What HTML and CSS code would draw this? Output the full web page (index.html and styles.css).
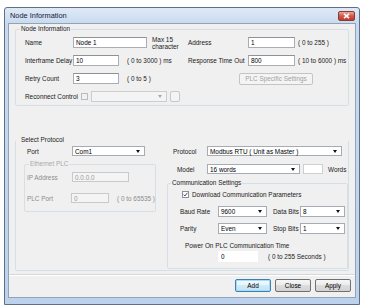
FILE: index.html
```html
<!DOCTYPE html>
<html lang="en">
<head>
  <meta charset="UTF-8">
  <title>Node Information</title>
  <link rel="stylesheet" href="styles.css">
</head>
<body>
  <div class="window">
    <div class="titlebar">
      <span class="title">Node Information</span>
      <span class="close">
        <svg width="7" height="6" viewBox="0 0 7 6"><path d="M1 0.8 L6 5.2 M6 0.8 L1 5.2" stroke="#fff" stroke-width="1.6"/></svg>
      </span>
    </div>

    <div class="client">
      <fieldset class="group node">
        <legend>Node Information</legend>

        <div class="row">
          <div class="half">
            <span class="lbl">Name</span>
            <input class="w74" value="Node 1">
            <span class="max">Max 15<br>character</span>
          </div>
          <span class="lbl-r">Address</span>
          <input class="w47" value="1">
          <span class="note-r">( 0 to 255 )</span>
        </div>

        <div class="row">
          <div class="half">
            <span class="lbl">Interframe Delay</span>
            <input class="w46" value="10">
            <span class="note">( 0 to 3000 ) ms</span>
          </div>
          <span class="lbl-r">Response Time Out</span>
          <input class="w47" value="800">
          <span class="note-r">( 10 to 6000 ) ms</span>
        </div>

        <div class="row">
          <div class="half">
            <span class="lbl">Retry Count</span>
            <input class="w46" value="3">
            <span class="note">( 0 to 5 )</span>
          </div>
          <span class="btn plc">PLC Specific Settings</span>
        </div>

        <div class="row">
          <span class="lbl wide">Reconnect Control</span>
          <span class="check off"></span>
          <span class="combo off reconnect"><span></span><i class="arrow"></i></span>
          <span class="more"></span>
        </div>
      </fieldset>

      <fieldset class="group lower">
        <legend>Select Protocol</legend>
        <div class="lower-body">
          <div class="left">
            <div class="row short port">
              <span class="lbl-p">Port</span>
              <span class="combo com"><span>Com1</span><i class="arrow"></i></span>
            </div>

            <fieldset class="group eth">
              <legend>Ethernet PLC</legend>
              <div class="row short">
                <span class="lbl-p">IP Address</span>
                <input class="off w57" value="0.0.0.0">
              </div>
              <div class="row short plcport">
                <span class="lbl-p">PLC Port</span>
                <input class="off w38" value="0">
                <span class="note">( 0 to 65535 )</span>
              </div>
            </fieldset>
          </div>

          <div class="right">
            <div class="row short">
              <span class="lbl-m proto">Protocol</span>
              <span class="combo protocol"><span>Modbus RTU ( Unit as Master )</span><i class="arrow"></i></span>
            </div>
            <div class="row short model">
              <span class="lbl-m mdl">Model</span>
              <span class="combo words16"><span>16 words</span><i class="arrow"></i></span>
              <span class="wordbox"></span>
              <span class="words">Words</span>
            </div>

            <fieldset class="group comm">
              <legend>Communication Settings</legend>
              <div class="row chk">
                <span class="check on">
                  <svg width="5" height="5" viewBox="0 0 5 5"><path d="M0.6 2.6 L1.9 4 L4.4 0.8" fill="none" stroke="#3a4f7a" stroke-width="1"/></svg>
                </span>
                <span class="chk-text">Download Communication Parameters</span>
              </div>
              <div class="row baud">
                <span class="lbl-c">Baud Rate</span>
                <span class="combo w49"><span>9600</span><i class="arrow"></i></span>
                <span class="lbl-b">Data Bits</span>
                <span class="combo w45"><span>8</span><i class="arrow"></i></span>
              </div>
              <div class="row parity">
                <span class="lbl-c">Parity</span>
                <span class="combo w49"><span>Even</span><i class="arrow"></i></span>
                <span class="lbl-b">Stop Bits</span>
                <span class="combo w45"><span>1</span><i class="arrow"></i></span>
              </div>
              <div class="power">Power On PLC Communication Time</div>
              <div class="row power-row">
                <input class="plain" value="0">
                <span class="note-p">( 0 to 255 Seconds )</span>
              </div>
            </fieldset>
          </div>
        </div>
      </fieldset>

      <div class="sep"></div>

      <div class="buttons">
        <span class="btn act default">Add</span>
        <span class="btn act">Close</span>
        <span class="btn act">Apply</span>
      </div>
    </div>
  </div>
</body>
</html>
```

FILE: styles.css
```css
* {
  box-sizing: border-box;
}

body {
  margin: 0;
  background: #fff;
  font-family: 'Liberation Sans', Arial, sans-serif;
  font-size: 6.4px;
  color: #1a1a1a;
}

.window {
  margin: 7px 0 0 4px;
  width: 356px;
  height: 298px;
  border: 1px solid #5d7088;
  border-radius: 3px 3px 0 0;
  background: linear-gradient(#dfe9f6, #c8daef 16px, #bcd2ec);
  padding: 0 3px 6px;
  display: flex;
  flex-direction: column;
}

.titlebar {
  height: 15px;
  display: flex;
  align-items: center;
}

.title {
  padding-left: 2px;
  font-size: 7.4px;
  color: #10203a;
}

.close {
  margin-left: auto;
  margin-right: 1px;
  width: 17px;
  height: 10px;
  border: 1px solid #8a3a32;
  border-radius: 2px;
  background: linear-gradient(#e9a99a, #d0574a 50%, #c4392b);
  display: flex;
  justify-content: center;
  align-items: center;
}

.client {
  flex: 1;
  background: #f0f0f0;
  border: 1px solid #8fa3bb;
  display: flex;
  flex-direction: column;
}

/* group boxes */
.group {
  border: 1px solid #d5dfe5;
  border-radius: 2px;
  margin: 0 6px;
  min-width: 0;
}

.group legend {
  padding: 0 1px;
  line-height: 8px;
}

.node {
  margin-top: 1px;
  padding: 4px 0 3px 9px;
}

.node legend {
  margin-left: -5px;
}

.row {
  display: flex;
  align-items: center;
  height: 11px;
  white-space: nowrap;
}

.node .row + .row {
  margin-top: 7px;
}

.half {
  display: flex;
  align-items: center;
  width: 163px;
  height: 11px;
}

.lbl {
  width: 48px;
}

.lbl.wide {
  width: 56px;
}

.lbl-r {
  width: 60px;
}

.note {
  margin-left: 8px;
}

.note-r {
  margin-left: 3px;
}

.max {
  margin-left: 5px;
  line-height: 7px;
}

input {
  font: inherit;
  color: #000;
  height: 11px;
  border: 1px solid #abadb3;
  border-top-color: #8e9196;
  background: #fff;
  padding: 0 2px;
  margin: 0;
  outline: none;
}

input.off {
  background: #f4f4f4;
  border-color: #c9c9c9;
  color: #9a9a9a;
  height: 10px;
}

input.plain {
  border-color: #fff;
  margin-left: 38px;
  width: 40px;
}

.w74 { width: 74px; }
.w47 { width: 47px; }
.w46 { width: 46px; }
.w57 { width: 57px; }
.w38 { width: 38px; }

.btn {
  display: flex;
  justify-content: center;
  align-items: center;
  border: 1px solid #707070;
  border-radius: 2px;
}

.plc {
  margin-left: 51px;
  width: 74px;
  height: 12px;
  background: #f4f4f4;
  border-color: #c4c4c4;
  color: #a2a2a2;
}

.check {
  width: 7px;
  height: 7px;
  border: 1px solid #8e8f8f;
  background: #fff;
  display: flex;
  justify-content: center;
  align-items: center;
}

.check.off {
  border-color: #bcbcbc;
  background: #f1f1f1;
}

.combo {
  height: 11px;
  border: 1px solid #a5acb5;
  background: #fff;
  color: #000;
  display: flex;
  justify-content: space-between;
  align-items: center;
  padding: 0 4px 0 2px;
}

.combo.off {
  background: #f4f4f4;
  border-color: #cdcdcd;
}

.arrow {
  width: 0;
  height: 0;
  border-left: 2.5px solid transparent;
  border-right: 2.5px solid transparent;
  border-top: 3px solid #111;
}

.combo.off .arrow {
  border-top-color: #a8a8a8;
}

.reconnect {
  margin-left: 3px;
  width: 76px;
}

.more {
  margin-left: 3px;
  width: 10px;
  height: 11px;
  border: 1px solid #c8c8c8;
  border-radius: 2px;
  background: #f4f4f4;
}

/* select protocol */
.lower {
  margin-top: 30px;
  padding: 2px 0 1px 8px;
  border-top-color: transparent;
}

.lower > legend {
  margin-left: -4px;
}

.lower-body {
  display: flex;
}

.left {
  width: 143px;
}

.right {
  flex: 1;
}

.row.short {
  height: 10px;
}

.port {
  padding-left: 3px;
}

.lbl-p {
  width: 45px;
}

.com {
  width: 73px;
  height: 10px;
}

.eth {
  margin: 4px 0 0;
  width: 132px;
  padding: 4px 0 8px 2px;
  color: #8c8c8c;
}

.eth legend {
  margin-left: 2px;
  color: #a8a8a8;
}

.plcport {
  margin-top: 11px;
}

.lbl-m {
  width: 40px;
}

.proto {
  padding-left: 6px;
}

.mdl {
  padding-left: 10px;
}

.protocol {
  width: 135px;
  height: 10px;
}

.model {
  margin-top: 8px;
}

.words16 {
  width: 93px;
  height: 10px;
}

.wordbox {
  margin-left: 3px;
  width: 20px;
  height: 10px;
  border: 1px solid #cfcfcf;
  background: #fff;
}

.words {
  margin-left: 5px;
}

.comm {
  margin: 5px 0 0;
  padding: 3px 0 6px 12px;
}

.comm legend {
  margin-left: -9px;
}

.row.chk {
  height: 8px;
}

.chk .check {
  margin-left: 2px;
}

.chk-text {
  margin-left: 3px;
}

.baud {
  margin-top: 8px;
}

.parity {
  margin-top: 6px;
}

.lbl-c {
  width: 38px;
}

.lbl-b {
  margin-left: 6px;
  width: 27px;
}

.w49 { width: 49px; }
.w45 { width: 45px; }

.power {
  margin-top: 8px;
  padding-left: 5px;
  line-height: 8px;
}

.power-row {
  margin-top: 1px;
}

.note-p {
  margin-left: 10px;
}

.sep {
  margin-top: 3px;
  height: 2px;
  border-top: 1px solid #d5d9dd;
  border-bottom: 1px solid #fff;
}

.buttons {
  margin-top: 3px;
  padding-right: 4px;
  display: flex;
  justify-content: flex-end;
  gap: 4px;
}

.act {
  width: 36px;
  height: 13px;
  color: #000;
  background: linear-gradient(#f6f6f6, #eaeaea 50%, #dcdcdc 50%, #d2d2d2);
}

.act.default {
  border-color: #3c7fb1;
  box-shadow: inset 0 0 0 1px #a7dcf6;
  background: linear-gradient(#f4fafd, #e5f3fb 50%, #cfeaf8 50%, #bfe2f5);
}
```
